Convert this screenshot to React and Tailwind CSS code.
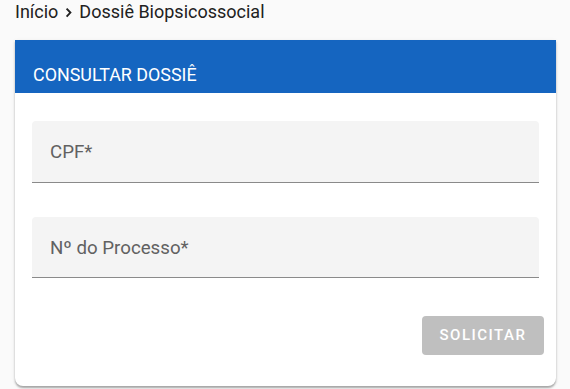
import React from "react";

export default function App() {
  return (
    <div className="min-h-[389px] w-[570px] bg-[#fafafa] pl-[15px] pr-[14px]" style={{ fontFamily: "Roboto, 'Liberation Sans', sans-serif" }}>
      <div className="flex h-[23px] items-center text-[18px] leading-none text-[#212121]">
        <span>Início</span>
        <svg width="21" height="16" viewBox="0 0 21 16" className="mt-[2px]">
          <path d="M8.6 3.6L12.4 7.6L8.6 11.6" fill="none" stroke="#212121" strokeWidth="1.9" />
        </svg>
        <span>Dossiê Biopsicossocial</span>
      </div>
      <div className="mt-[17px] overflow-hidden rounded-b-[8px] bg-white shadow-[0_2px_2px_rgba(0,0,0,0.3),0_1px_4px_rgba(0,0,0,0.08)]">
        <div className="flex h-[53px] items-end bg-[#1565c0] px-[18px] pb-[9px] text-[17.9px] leading-none text-white">
          CONSULTAR DOSSIÊ
        </div>
        <div className="px-[17px] pt-[28px] pb-[31px]">
          <div className="flex h-[62px] items-center rounded-t-[4px] border-b border-[#8a8a8a] bg-[#f4f4f4] px-[18px] pt-[2px] text-[18.7px] text-[#616161]">
            CPF*
          </div>
          <div className="mt-[34px] flex h-[61px] items-center rounded-t-[4px] border-b border-[#8a8a8a] bg-[#f4f4f4] px-[18px] pt-[2px] text-[18.7px] text-[#616161]">
            Nº do Processo*
          </div>
          <div className="mt-[38px] flex justify-end -mr-[5px]">
            <div className="flex h-[39px] w-[122px] items-center justify-center rounded-[4px] bg-[#bfbfbf] text-[15px] font-medium tracking-[0.1em] text-white">
              SOLICITAR
            </div>
          </div>
        </div>
      </div>
    </div>
  );
}
